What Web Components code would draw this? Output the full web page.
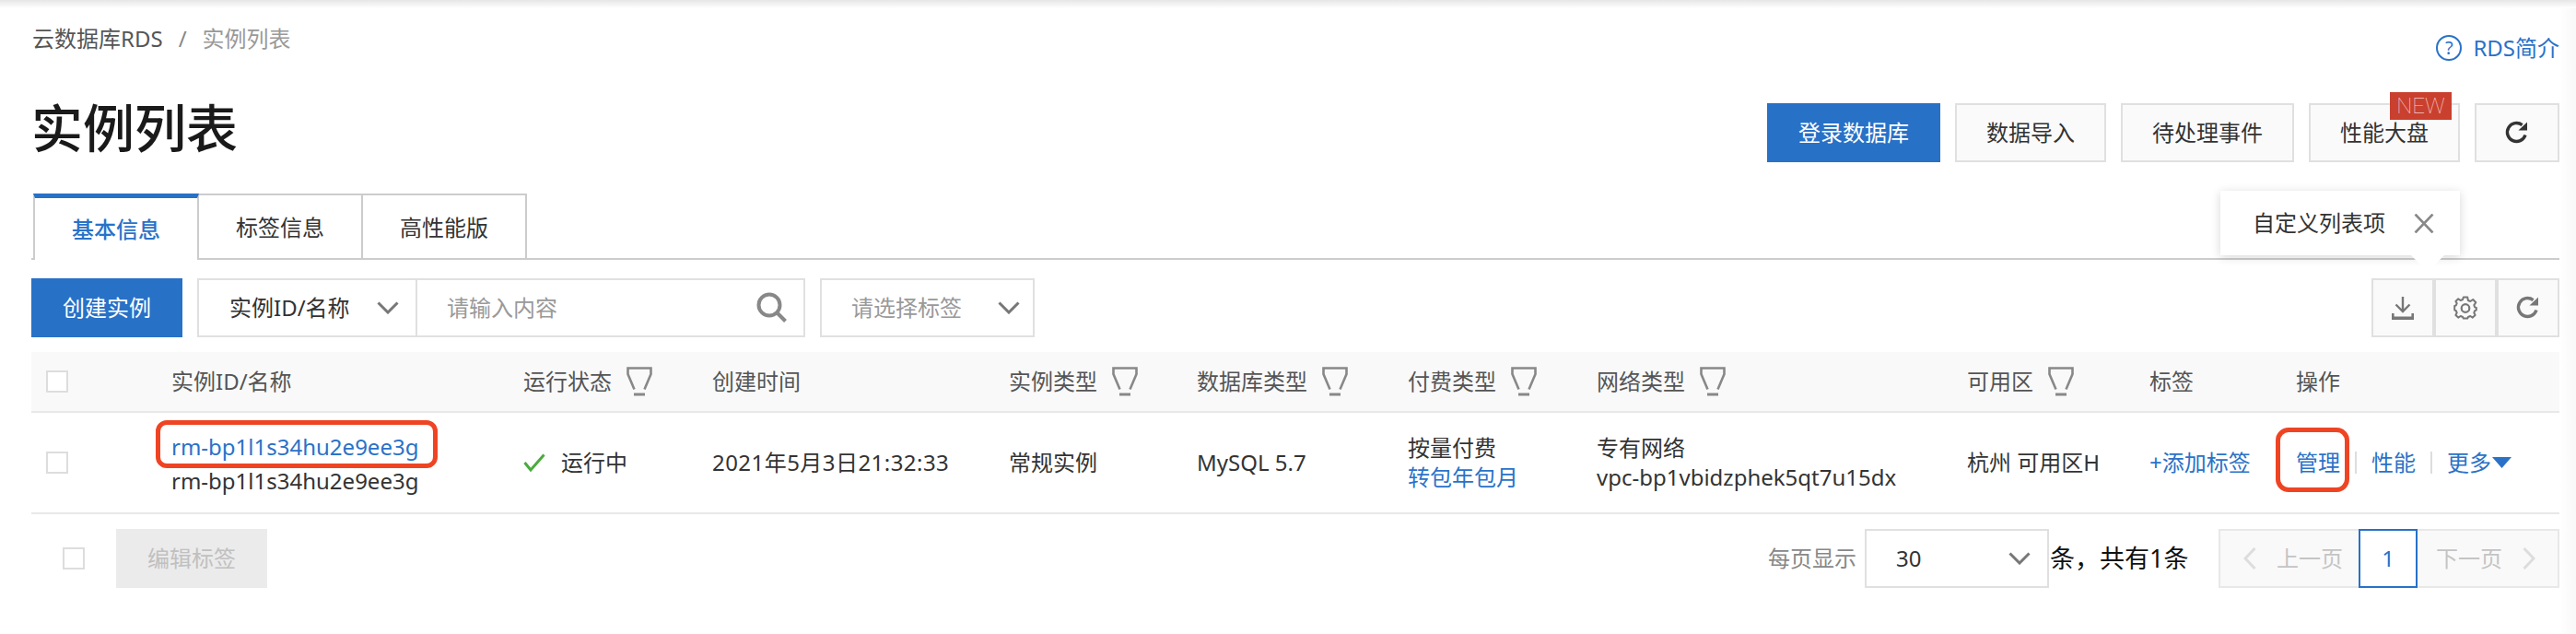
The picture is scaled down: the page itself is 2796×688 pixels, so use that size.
<!DOCTYPE html>
<html lang="zh-CN"><head><meta charset="utf-8"><title>实例列表</title>
<style>
html,body{margin:0;padding:0;background:#fff}
body{font:24px/1.2 "Noto Sans","Noto Sans CJK SC",sans-serif;color:#333}
</style></head><body>
<rds-page>
  <rds-head>
    <rds-btn primary>登录数据库</rds-btn>
    <rds-btn>数据导入</rds-btn>
    <rds-btn>待处理事件</rds-btn>
    <rds-btn>性能大盘<rds-badge slot="over">NEW</rds-badge></rds-btn>
    <rds-btn icon><rds-icon name="refresh" style="color:#333"></rds-icon></rds-btn>
  </rds-head>
  <rds-tabs></rds-tabs>
  <rds-toolbar></rds-toolbar>
  <rds-table></rds-table>
  <rds-footer></rds-footer>
</rds-page>
<script>
const ICONS={
 refresh:'<svg width="28" height="28" viewBox="0 0 28 28"><path d="M23 16.500A10 10 0 1 1 19.600 5.600" fill="none" stroke="currentColor" stroke-width="3.400"/><path d="M15.500 11.500L25 2.500V11.500Z" fill="currentColor"/></svg>',
 download:'<svg width="24" height="25" viewBox="0 0 24 25"><path d="M12 0V15M4.500 8.500L12 16L19.500 8.500" fill="none" stroke="currentColor" stroke-width="2.400"/><path d="M0 18H2.600V21.500H21.400V18H24V25H0Z" fill="currentColor"/></svg>',
 gear:'<svg width="26" height="26" viewBox="0 0 26 26"><path d="M10.800 1.500H15.200L15.900 5L18.300 6L21.200 4L24.300 7.200L22.300 10.100L23.200 12.300L24.800 13V15.500L23.200 16.100L22.300 18.300L23.600 21L20.800 23.600L18.300 22L15.900 23L15.200 24.500H10.800L10.100 23L7.700 22L5.200 23.600L2.400 21L3.700 18.300L2.800 16.100L1.200 15.500V11L2.800 10.300L3.700 8.100L2.400 6L5.200 3.300L7.700 5L10.100 4Z" fill="none" stroke="currentColor" stroke-width="2" stroke-linejoin="round"/><circle cx="13" cy="13.500" r="4.300" fill="none" stroke="currentColor" stroke-width="2.200"/></svg>',
 search:'<svg width="34" height="34" viewBox="0 0 34 34"><circle cx="14" cy="14" r="11.500" fill="none" stroke="currentColor" stroke-width="4"/><path d="M22.500 22.500L31.500 31.500" stroke="currentColor" stroke-width="4"/></svg>',
 down:'<svg width="24" height="14" viewBox="0 0 24 14"><path d="M1.500 1.500L12 12L22.500 1.500" fill="none" stroke="currentColor" stroke-width="3"/></svg>',
 left:'<svg width="14" height="24" viewBox="0 0 14 24"><path d="M12.500 1L2 12L12.500 23" fill="none" stroke="currentColor" stroke-width="3"/></svg>',
 right:'<svg width="14" height="24" viewBox="0 0 14 24"><path d="M1.500 1L12 12L1.500 23" fill="none" stroke="currentColor" stroke-width="3"/></svg>',
 filter:'<svg width="28" height="32" viewBox="0 0 28 32"><path d="M8.500 24.500L1.500 8V1.500H26.500V8L19.500 24.500" fill="none" stroke="currentColor" stroke-width="2.600"/><rect x="8" y="28.500" width="12" height="3" fill="currentColor"/></svg>',
 check:'<svg width="24" height="20" viewBox="0 0 24 20"><path d="M1.500 10L8 18L22.500 1.500" fill="none" stroke="currentColor" stroke-width="3"/></svg>',
 close:'<svg width="22" height="21" viewBox="0 0 22 21"><path d="M1.500 .5L20.500 20.500M20.500 .5L1.500 20.500" fill="none" stroke="currentColor" stroke-width="2.600"/></svg>',
 caret:'<svg width="21" height="12" viewBox="0 0 21 12"><path d="M0 0H21L10.500 12Z" fill="currentColor"/></svg>'
};
function def(name,html){
  customElements.define(name,class extends HTMLElement{
    constructor(){super();this.attachShadow({mode:'open'}).innerHTML=html}
  });
}
customElements.define('rds-icon',class extends HTMLElement{
  constructor(){super();this.attachShadow({mode:'open'})}
  connectedCallback(){this.shadowRoot.innerHTML='<style>:host{display:inline-flex;line-height:0;flex:none}</style>'+(ICONS[this.getAttribute('name')]||'')}
});

def('rds-page',`<style>
:host{display:block;height:688px;box-sizing:border-box;padding:0 18px 0 34px;overflow:hidden;
background:linear-gradient(#e6e6e6,#fff 9px) top/100% 9px no-repeat,linear-gradient(90deg,#fff,#f8f8f8) right/18px 100% no-repeat,#fff}
</style><slot></slot>`);

def('rds-badge',`<style>:host{position:absolute;left:86px;top:-14px;width:67px;height:30px;background:#c9402f;color:#f6c8c0;font-family:Roboto,sans-serif;font-weight:100;display:flex;align-items:center;justify-content:center;font-size:24px;line-height:30px}</style><slot></slot>`);

def('rds-btn',`<style>
:host{position:relative;display:inline-flex;align-items:center;justify-content:center;box-sizing:border-box;height:64px;padding:0 32px;border:2px solid #e0e0e0;background:#fafafa;color:#333;font-size:24px;white-space:nowrap}
:host([primary]){background:#2771c7;border-color:#2771c7;color:#fff}
:host([icon]){width:92px;padding:0}
:host([cell]){width:68px;padding:0;color:#888}
:host([disabled]){background:#ebebeb;border-color:#ebebeb;color:#c0c0c0}
</style><slot></slot><slot name="over"></slot>`);

def('rds-head',`<style>
:host{display:grid;grid-template-columns:1fr auto;grid-template-rows:98px 112px;height:210px}
.bc{padding:28px 0 0 1px;line-height:28px;color:#555;white-space:nowrap}
.bc i{font-style:normal;color:#888;margin:0 17px}.bc b{font-weight:400;color:#999}
.intro{justify-self:end;margin-top:38px;display:flex;align-items:center;gap:12px;height:28px;color:#2a72c8}
.q{box-sizing:border-box;width:28px;height:28px;border:2px solid #2a72c8;border-radius:50%;font-size:20px;line-height:24px;text-align:center}
h1{margin:0;padding:1px 0 0 0;font-size:56px;line-height:78px;font-weight:500;color:#1a1a1a}
.btns{display:flex;gap:16px;margin-top:14px;align-self:start}
</style>
<div class="bc">云数据库RDS<i>/</i><b>实例列表</b></div>
<div class="intro"><span class="q">?</span><span>RDS简介</span></div>
<h1>实例列表</h1>
<div class="btns"><slot></slot></div>`);

def('rds-tabs',`<style>
:host{position:relative;display:flex;height:72px;box-sizing:border-box;border-bottom:2px solid #ccc;padding-left:2px}
.t{box-sizing:border-box;width:178px;height:72px;border:2px solid #ccc;border-left:0;border-bottom:0;display:flex;align-items:center;justify-content:center;color:#333}
.a{width:180px;border-left:2px solid #ccc;border-top:5px solid #2771c7;color:#2a72c8;font-weight:500;background:#fff;padding-top:2px;position:relative;z-index:1}
.tip{position:absolute;right:108px;top:-3px;width:260px;height:70px;box-sizing:border-box;background:#fff;box-shadow:0 2px 10px rgba(0,0,0,.16);display:flex;align-items:center;padding-left:35px;gap:31px;color:#333;z-index:2}
.tip:after{content:"";position:absolute;left:212px;bottom:-13px;width:26px;height:26px;background:#fff;transform:rotate(45deg);clip-path:polygon(100% 0,100% 100%,0 100%);}
rds-icon{color:#888}
</style>
<div class="t a">基本信息</div><div class="t">标签信息</div><div class="t">高性能版</div>
<div class="tip"><span>自定义列表项</span><rds-icon name="close"></rds-icon></div>`);

def('rds-toolbar',`<style>
:host{display:flex;margin-top:20px;height:64px;gap:16px}
.g{display:flex;width:660px;box-sizing:border-box;border:2px solid #e0e0e0;background:#fff}
.sel{box-sizing:border-box;width:237px;border-right:2px solid #e0e0e0;display:flex;align-items:center;padding-left:33px;color:#333;justify-content:space-between;padding-right:18px;white-space:nowrap}
.inp{flex:1;display:flex;align-items:center;justify-content:space-between;padding:0 17px 0 32px;color:#999}
.tag{box-sizing:border-box;width:233px;border:2px solid #e0e0e0;display:flex;align-items:center;padding:0 14px 0 32px;justify-content:space-between;color:#999;white-space:nowrap}
rds-icon{color:#777}
.r{margin-left:auto;display:flex}
</style>
<rds-btn primary>创建实例</rds-btn>
<div class="g"><div class="sel"><span>实例ID/名称</span><rds-icon name="down"></rds-icon></div><div class="inp"><span>请输入内容</span><rds-icon name="search" style="color:#888"></rds-icon></div></div>
<div class="tag"><span>请选择标签</span><rds-icon name="down"></rds-icon></div>
<div class="r"><rds-btn cell><rds-icon name="download"></rds-icon></rds-btn><rds-btn cell><rds-icon name="gear"></rds-icon></rds-btn><rds-btn cell><rds-icon name="refresh"></rds-icon></rds-btn></div>`);

def('rds-check',`<style>:host{display:block;width:24px;height:24px;box-sizing:border-box;border:2px solid #ddd;background:#fff}</style>`);

const th=(t,f)=>`<div class="h">${t?`<span>${t}</span>`:''}${f?'<rds-icon name="filter"></rds-icon>':''}</div>`;
def('rds-table',`<style>
:host{display:block;margin-top:16px;--cols:152px 382px 205px 322px 204px 229px 205px 402px 198px 159px 286px}
.row{display:grid;grid-template-columns:var(--cols);white-space:nowrap}
.hd{height:66px;box-sizing:border-box;background:#f9f9f9;border-bottom:2px solid #e8e8e8;color:#555}
.h{display:flex;align-items:center;gap:16px;height:64px}
.h rds-icon{color:#888;margin-top:-1px}
.bd{height:110px;box-sizing:border-box;border-bottom:2px solid #e8e8e8;color:#333}
.c{display:flex;align-items:center;height:108px;position:relative}
.ck{padding-left:16px}
.two{display:block;box-sizing:border-box;line-height:32px;padding-top:22px}
.name{line-height:37px;padding-top:18px}
a{color:#2a72c8;text-decoration:none}
.mark{position:absolute;box-sizing:border-box;border:5px solid #ef4423;pointer-events:none}
.m1{left:-17px;top:8px;width:306px;height:52px;border-radius:12px}
.m2{left:-22px;top:16px;width:80px;height:70px;border-radius:14px}
.ok{color:#4aab3d;margin-right:17px}
.sep{width:2px;height:24px;background:#ddd;margin:0 16px}
.op{color:#2a72c8}.op rds-icon{margin-left:1px}
.date{letter-spacing:.45px}
</style>
<div class="row hd">
<div class="h ck"><rds-check></rds-check></div>${th('实例ID/名称')}${th('运行状态',1)}${th('创建时间')}${th('实例类型',1)}${th('数据库类型',1)}${th('付费类型',1)}${th('网络类型',1)}${th('可用区',1)}${th('标签')}${th('操作')}
</div>
<div class="row bd">
<div class="c ck"><rds-check></rds-check></div>
<div class="c two name"><a>rm-bp1l1s34hu2e9ee3g</a><div>rm-bp1l1s34hu2e9ee3g</div><div class="mark m1"></div></div>
<div class="c"><rds-icon class="ok" name="check"></rds-icon>运行中</div>
<div class="c date">2021年5月3日21:32:33</div>
<div class="c">常规实例</div>
<div class="c">MySQL 5.7</div>
<div class="c two"><div>按量付费</div><a>转包年包月</a></div>
<div class="c two"><div>专有网络</div><div>vpc-bp1vbidzphek5qt7u15dx</div></div>
<div class="c">杭州 可用区H</div>
<div class="c"><a>+添加标签</a></div>
<div class="c op"><span>管理</span><i class="sep"></i><span>性能</span><i class="sep"></i><span>更多</span><rds-icon name="caret"></rds-icon><div class="mark m2"></div></div>
</div>`);

def('rds-footer',`<style>
:host{display:flex;align-items:center;margin-top:16px;height:64px;padding-left:34px;white-space:nowrap}
rds-btn{margin-left:34px}
.r{margin-left:auto;display:flex;align-items:center;height:64px}
.lbl{color:#888;margin-right:9px}
.sel{box-sizing:border-box;width:200px;height:64px;border:2px solid #e0e0e0;display:flex;align-items:center;justify-content:space-between;padding:0 18px 0 32px;color:#333}
.sel rds-icon{color:#777}
.tot{font-size:27px;color:#111;width:184px;padding-left:1px;box-sizing:border-box}
.pg{display:flex;width:370px;height:64px;box-sizing:border-box;border:2px solid #e8e8e8;background:#f9f9f9;color:#c4c4c4;align-items:stretch}
.p{width:150px;display:flex;align-items:center;gap:22px;padding-left:25px;box-sizing:border-box}
.n{box-sizing:border-box;width:64px;margin:-2px 0;border:2px solid #2771c7;background:#fff;color:#2a72c8;display:flex;align-items:center;justify-content:center}
.p rds-icon{color:#ddd}
.nx{padding-left:20px}
</style>
<rds-check></rds-check><rds-btn disabled>编辑标签</rds-btn>
<div class="r"><span class="lbl">每页显示</span>
<div class="sel"><span>30</span><rds-icon name="down"></rds-icon></div>
<span class="tot">条，共有1条</span>
<div class="pg"><div class="p"><rds-icon name="left"></rds-icon><span>上一页</span></div><div class="n">1</div><div class="p nx"><span>下一页</span><rds-icon name="right"></rds-icon></div></div>
</div>`);
</script>
</body></html>
